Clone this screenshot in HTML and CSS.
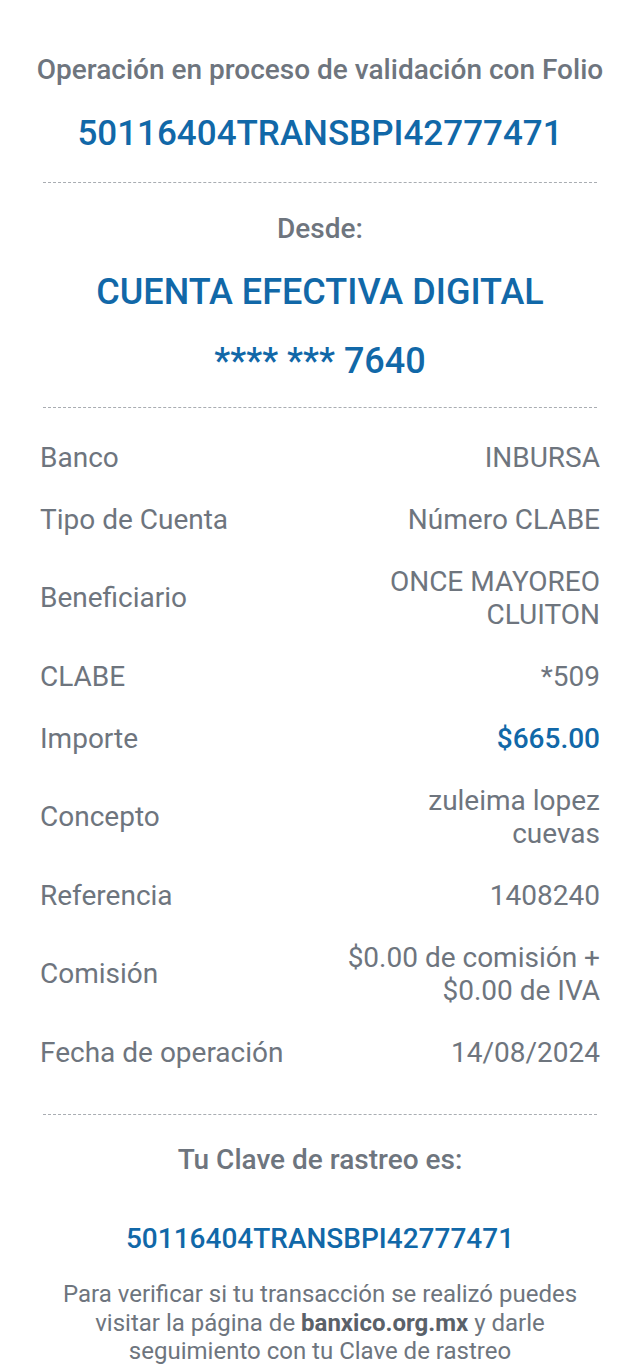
FILE: index.html
```html
<!DOCTYPE html>
<html lang="es">
<head>
    <meta charset="UTF-8">
    <meta name="viewport" content="width=device-width, initial-scale=1.0">
    <title>Comprobante de transferencia</title>
    <link rel="stylesheet" href="styles.css">
</head>
<body>
    <div class="receipt">
        <!-- Encabezado -->
        <div class="header">
            <h1 class="title">Operación en proceso de validación con Folio</h1>
            <p class="folio">50116404TRANSBPI42777471</p>
        </div>

        <hr class="divider">

        <!-- Cuenta origen -->
        <div class="origin">
            <h2 class="subtitle">Desde:</h2>
            <p class="account-name">CUENTA EFECTIVA DIGITAL</p>
            <p class="account-number">**** *** 7640</p>
        </div>

        <hr class="divider">

        <!-- Detalle -->
        <div class="details">
            <div class="row">
                <span class="label">Banco</span>
                <span class="value">INBURSA</span>
            </div>
            <div class="row">
                <span class="label">Tipo de Cuenta</span>
                <span class="value">Número CLABE</span>
            </div>
            <div class="row">
                <span class="label">Beneficiario</span>
                <span class="value">ONCE MAYOREO<br>CLUITON</span>
            </div>
            <div class="row">
                <span class="label">CLABE</span>
                <span class="value">*509</span>
            </div>
            <div class="row">
                <span class="label">Importe</span>
                <span class="value amount">$665.00</span>
            </div>
            <div class="row">
                <span class="label">Concepto</span>
                <span class="value">zuleima lopez<br>cuevas</span>
            </div>
            <div class="row">
                <span class="label">Referencia</span>
                <span class="value">1408240</span>
            </div>
            <div class="row">
                <span class="label">Comisión</span>
                <span class="value">$0.00 de comisión +<br>$0.00 de IVA</span>
            </div>
            <div class="row">
                <span class="label">Fecha de operación</span>
                <span class="value">14/08/2024</span>
            </div>
        </div>

        <hr class="divider">

        <!-- Clave de rastreo -->
        <div class="tracking">
            <h2 class="subtitle">Tu Clave de rastreo es:</h2>
            <p class="tracking-key">50116404TRANSBPI42777471</p>
            <p class="note">Para verificar si tu transacción se realizó puedes visitar la página de <strong>banxico.org.mx</strong> y darle seguimiento con tu Clave de rastreo</p>
        </div>
    </div>
</body>
</html>
```

FILE: styles.css
```css
* {
    margin: 0;
    padding: 0;
    box-sizing: border-box;
    font-family: Roboto, "Liberation Sans", Arial, sans-serif;
}

body {
    background-color: white;
    color: #6e757e;
}

.receipt {
    padding: 54px 36px 0;
    text-align: center;
}

/* Separadores */
.divider {
    border: none;
    border-top: 1px dashed #a9adb2;
    margin: 0 7px;
}

/* Encabezado */
.title {
    font-size: 28px;
    line-height: 32px;
    font-weight: 500;
}

.folio {
    margin: 26px 0;
    font-size: 35px;
    line-height: 44px;
    font-weight: 500;
    color: #1168a8;
}

/* Cuenta origen */
.subtitle {
    font-size: 28px;
    line-height: 32px;
    font-weight: 500;
}

.origin {
    padding: 30px 0 25px;
}

.account-name {
    margin-top: 26px;
    font-size: 36px;
    line-height: 42px;
    font-weight: 500;
    color: #1168a8;
}

.account-number {
    margin-top: 27px;
    font-size: 36px;
    line-height: 42px;
    font-weight: 500;
    color: #1168a8;
}

/* Detalle */
.details {
    padding: 18px 4px 31px;
}

.row {
    display: flex;
    justify-content: space-between;
    align-items: center;
    padding: 14.5px 0;
    font-size: 28px;
    line-height: 33px;
}

.label {
    text-align: left;
}

.value {
    text-align: right;
}

.amount {
    color: #1168a8;
    font-weight: 500;
}

/* Clave de rastreo */
.tracking {
    padding-top: 29px;
}

.tracking-key {
    margin-top: 46px;
    font-size: 28px;
    line-height: 34px;
    font-weight: 500;
    color: #1168a8;
}

.note {
    margin: 24px 4px 0;
    font-size: 24px;
    line-height: 28.5px;
}

.note strong {
    font-weight: 700;
    color: #5a6169;
}
```
